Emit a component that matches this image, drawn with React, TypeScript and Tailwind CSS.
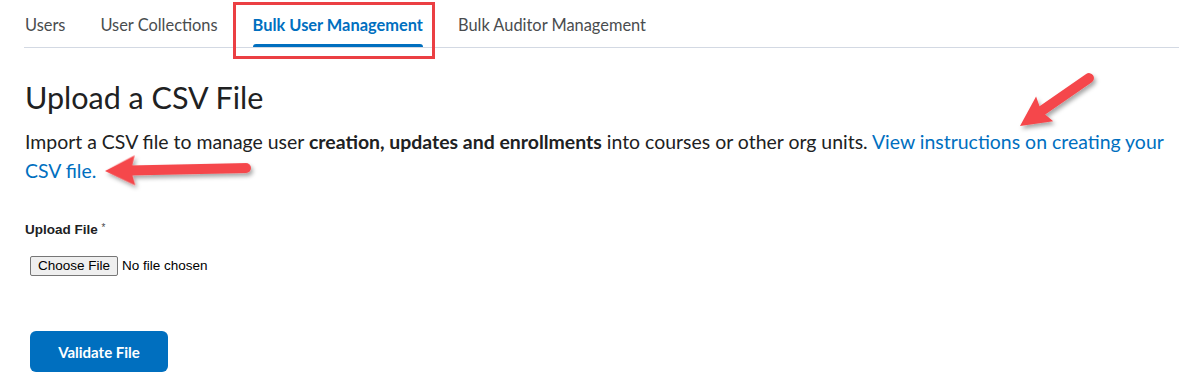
const tabs = ["Users", "User Collections", "Bulk User Management", "Bulk Auditor Management"];

const Arrows = () => (
  <svg className="pointer-events-none absolute left-0 top-0" width="1179" height="388">
    <defs>
      <filter id="sh" x="-20%" y="-20%" width="140%" height="160%">
        <feDropShadow dx="2" dy="3" stdDeviation="2" floodColor="#000" floodOpacity="0.35" />
      </filter>
    </defs>
    <g filter="url(#sh)" fill="#f5474b" stroke="#f5474b">
      <g transform="translate(1020 126) rotate(-34.8)">
        <line x1="22" y1="0" x2="84" y2="0" strokeWidth="10" strokeLinecap="round" />
        <path d="M0 0 L30 -15 L26 0 L30 15 Z" stroke="none" />
      </g>
      <g transform="translate(105 171) rotate(-1.2)">
        <line x1="22" y1="0" x2="141" y2="0" strokeWidth="10" strokeLinecap="round" />
        <path d="M0 0 L30 -15 L26 0 L30 15 Z" stroke="none" />
      </g>
    </g>
  </svg>
);

const App = () => {
  return (
    <div className="relative h-[388px] w-[1179px] overflow-hidden bg-white font-['Lato',sans-serif] text-[#202122]">
      <nav className="ml-[24px] border-b border-[#d3d9e3]">
        <ul className="flex h-[47px] gap-[35px] pl-[1px] pt-[3px]">
          {tabs.map((t) => {
            const on = t === "Bulk User Management";
            return (
              <li
                key={t}
                className={
                  on
                    ? "relative flex items-center text-[16.4px] font-bold text-[#006fbf]"
                    : "flex items-center text-[16.4px] text-[#494c4e]"
                }
              >
                {t}
                {on && <span className="absolute bottom-0 left-0 right-0 h-[3px] rounded-t-sm bg-[#006fbf]" />}
              </li>
            );
          })}
        </ul>
      </nav>
      <div className="absolute left-[233px] top-[2px] h-[57px] w-[202px] border-[3px] border-[#eb3f43]" />

      <main className="pl-[25px] pr-[12px]">
        <h1 className="mt-[30px] text-[30.5px] leading-[38px]">Upload a CSV File</h1>
        <p className="mt-[11px] text-[19.45px] leading-[29px]">
          Import a CSV file to manage user <strong className="font-bold">creation, updates and enrollments</strong> into
          courses or other org units.{" "}
          <a className="text-[#006fbf]">View instructions on creating your CSV file.</a>
        </p>

        <div className="mt-[32px] font-['Liberation_Sans',Arial,sans-serif]">
          <label className="text-[13.5px] font-bold">
            Upload File{" "}
            <span className="relative -top-[3px] text-[10px] font-normal text-[#494c4e]">*</span>
          </label>
          <div className="mt-[15px] flex items-center pl-[5px] text-[13.5px]">
            <button className="h-[20px] rounded-[2px] border border-[#767676] bg-[#efefef] px-[7px] leading-none text-black">
              Choose File
            </button>
            <span className="ml-[4px] text-black">No file chosen</span>
          </div>
        </div>

        <button className="ml-[5px] mt-[55px] h-[41px] w-[138px] rounded-[6px] bg-[#006fbf] text-[15px] font-bold text-white">
          Validate File
        </button>
      </main>

      <Arrows />
    </div>
  );
};

export default App;
